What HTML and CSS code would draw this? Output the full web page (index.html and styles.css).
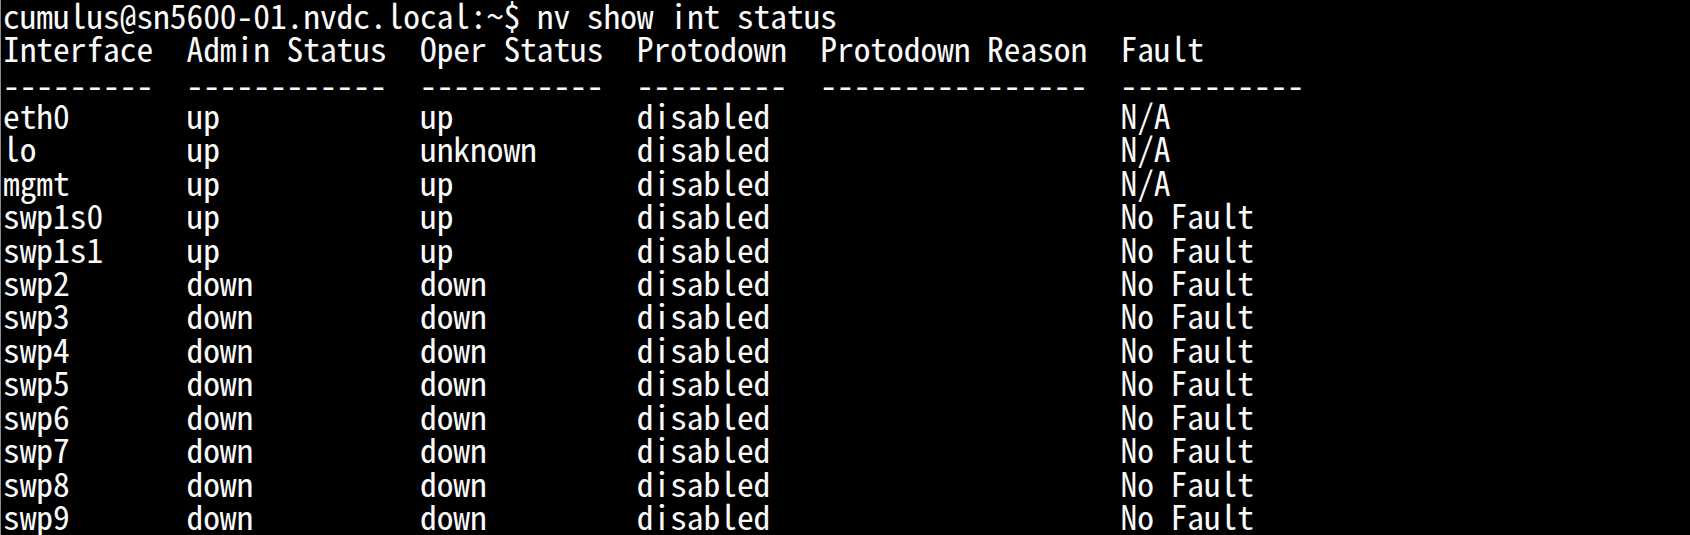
FILE: index.html
```html
<!DOCTYPE html>
<html lang="en">
<head>
<meta charset="utf-8">
<title>nv show int status</title>
<link rel="stylesheet" href="styles.css">
</head>
<body>
<div class="term">
  <div class="line">cumulus@sn5600-01.nvdc.local:~$ nv show int status</div>
  <div class="row"><span>Interface</span><span>Admin Status</span><span>Oper Status</span><span>Protodown</span><span>Protodown Reason</span><span>Fault</span></div>
  <div class="row dashes"><span>---------</span><span>------------</span><span>-----------</span><span>---------</span><span>----------------</span><span>-----------</span></div>
  <div class="row"><span>eth0</span><span>up</span><span>up</span><span>disabled</span><span></span><span>N/A</span></div>
  <div class="row"><span>lo</span><span>up</span><span>unknown</span><span>disabled</span><span></span><span>N/A</span></div>
  <div class="row"><span>mgmt</span><span>up</span><span>up</span><span>disabled</span><span></span><span>N/A</span></div>
  <div class="row"><span>swp1s0</span><span>up</span><span>up</span><span>disabled</span><span></span><span>No Fault</span></div>
  <div class="row"><span>swp1s1</span><span>up</span><span>up</span><span>disabled</span><span></span><span>No Fault</span></div>
  <div class="row"><span>swp2</span><span>down</span><span>down</span><span>disabled</span><span></span><span>No Fault</span></div>
  <div class="row"><span>swp3</span><span>down</span><span>down</span><span>disabled</span><span></span><span>No Fault</span></div>
  <div class="row"><span>swp4</span><span>down</span><span>down</span><span>disabled</span><span></span><span>No Fault</span></div>
  <div class="row"><span>swp5</span><span>down</span><span>down</span><span>disabled</span><span></span><span>No Fault</span></div>
  <div class="row"><span>swp6</span><span>down</span><span>down</span><span>disabled</span><span></span><span>No Fault</span></div>
  <div class="row"><span>swp7</span><span>down</span><span>down</span><span>disabled</span><span></span><span>No Fault</span></div>
  <div class="row"><span>swp8</span><span>down</span><span>down</span><span>disabled</span><span></span><span>No Fault</span></div>
  <div class="row"><span>swp9</span><span>down</span><span>down</span><span>disabled</span><span></span><span>No Fault</span></div>
</div>
</body>
</html>
```

FILE: styles.css
```css
html, body {
  margin: 0;
  padding: 0;
  background: #000;
  height: 100%;
  overflow: hidden;
}

.term {
  border-left: 1px solid #8a8a8a;
  margin-top: -2.5px;
  padding: 0 0 0 2px;
  height: calc(100% + 2.5px);
  box-sizing: border-box;
  color: #fafafa;
  font-family: "Noto Sans CJK JP", "Liberation Mono", monospace;
  font-feature-settings: "hwid" 1;
  font-size: 33.5px;
  line-height: 33.45px;
  letter-spacing: -0.07px;
}

.line {
  height: 33.45px;
  white-space: pre;
}

.row {
  display: grid;
  grid-template-columns: 183.5px 233.5px 216.8px 183.5px 300.2px 1fr;
  height: 33.45px;
  white-space: pre;
}

.dashes {
  padding-top: 3px;
  box-sizing: border-box;
}
```
